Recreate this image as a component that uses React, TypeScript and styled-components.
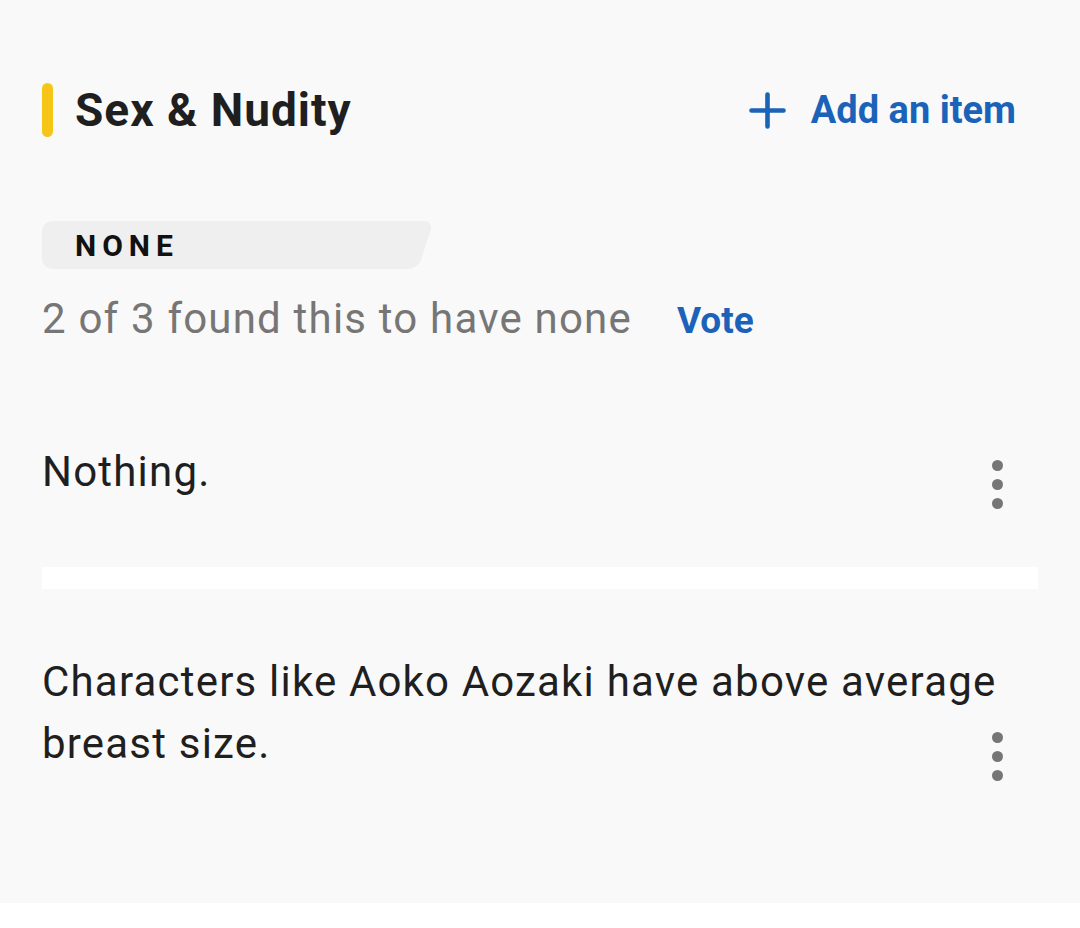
import React from "react"
import styled, { createGlobalStyle } from "styled-components"

const GlobalStyle = createGlobalStyle`
  html, body {
    margin: 0;
    padding: 0;
    background: #ffffff;
    font-family: Roboto, "Noto Sans", "Liberation Sans", sans-serif;
  }
`

const Kebab = () => (
  <KebabButton aria-label="More">
    <Dot />
    <Dot />
    <Dot />
  </KebabButton>
)

export default function App() {
  return (
    <>
      <GlobalStyle />
      <Section>
        <Header>
          <TitleWrap>
            <Accent />
            <Title>Sex &amp; Nudity</Title>
          </TitleWrap>
          <AddButton>
            <svg width="37" height="37" viewBox="0 0 37 37">
              <path d="M18.5 2.5v32M2.5 18.5h32" stroke="#1a63b8" strokeWidth="4.6" strokeLinecap="round" />
            </svg>
            <span>Add an item</span>
          </AddButton>
        </Header>

        <Chip>
          <ChipLabel>NONE</ChipLabel>
        </Chip>

        <StatRow>
          <StatText>2 of 3 found this to have none</StatText>
          <VoteLink>Vote</VoteLink>
        </StatRow>

        <ItemRow $first>
          <ItemText>Nothing.</ItemText>
          <Kebab />
        </ItemRow>

        <Divider />

        <ItemRow>
          <ItemText>
            Characters like Aoko Aozaki have above average
            <br />
            breast size.
          </ItemText>
          <Kebab />
        </ItemRow>
      </Section>
    </>
  )
}

const Section = styled.section`
  background: #f9f9f9;
  padding: 83px 42px 128px 42px;
  display: flex;
  flex-direction: column;
`

const Header = styled.div`
  display: flex;
  align-items: center;
  justify-content: space-between;
  height: 54px;
`

const TitleWrap = styled.div`
  display: flex;
  align-items: center;
  gap: 22px;
`

const Accent = styled.div`
  width: 11px;
  height: 54px;
  border-radius: 6px;
  background: #f5c518;
`

const Title = styled.h2`
  margin: 0;
  font-size: 46px;
  line-height: 54px;
  font-weight: 700;
  letter-spacing: 1px;
  color: #1f1f1f;
`

const AddButton = styled.button`
  display: flex;
  align-items: center;
  gap: 25px;
  border: none;
  background: none;
  padding: 0;
  margin-right: 22px;
  font-family: inherit;
  font-size: 38px;
  line-height: 54px;
  font-weight: 700;
  color: #1a63b8;
  cursor: pointer;
`

const Chip = styled.div`
  position: relative;
  width: 391px;
  height: 48px;
  margin-top: 84px;
  display: flex;
  align-items: center;

  &::before {
    content: "";
    position: absolute;
    top: 0;
    bottom: 0;
    left: 0;
    right: 40px;
    background: #efefef;
    border-radius: 10px 0 0 10px;
  }

  &::after {
    content: "";
    position: absolute;
    top: 0;
    bottom: 0;
    right: 15px;
    width: 60px;
    background: #efefef;
    border-radius: 0 9px 9px 0;
    transform: skewX(-18deg);
    transform-origin: bottom right;
  }
`

const ChipLabel = styled.span`
  position: relative;
  z-index: 1;
  padding-left: 33px;
  font-size: 30px;
  font-weight: 700;
  letter-spacing: 6px;
  color: #111111;
`

const StatRow = styled.div`
  display: flex;
  align-items: baseline;
  gap: 45px;
  margin-top: 26px;
  height: 48px;
  line-height: 48px;
`

const StatText = styled.span`
  font-size: 42px;
  color: #767676;
  letter-spacing: 1.2px;
`

const VoteLink = styled.a`
  font-size: 37px;
  font-weight: 700;
  color: #1a63b8;
  cursor: pointer;
`

const ItemRow = styled.div<{ $first?: boolean }>`
  display: flex;
  align-items: flex-end;
  justify-content: space-between;
  margin-top: ${(p) => (p.$first ? "98px" : "62px")};
  margin-bottom: ${(p) => (p.$first ? "64px" : "0")};
`

const ItemText = styled.p`
  flex: 1 1 0;
  min-width: 0;
  margin: 0;
  white-space: nowrap;
  font-size: 42px;
  line-height: 62px;
  color: #1f1f1f;
  letter-spacing: 1.2px;
`

const KebabButton = styled.button`
  flex: none;
  display: flex;
  flex-direction: column;
  align-items: center;
  justify-content: center;
  gap: 8px;
  width: 48px;
  height: 58px;
  margin-right: 17px;
  margin-bottom: -10px;
  padding: 0;
  border: none;
  background: none;
  cursor: pointer;
`

const Dot = styled.span`
  width: 11px;
  height: 11px;
  border-radius: 50%;
  background: #767676;
`

const Divider = styled.div`
  height: 22px;
  background: #ffffff;
`
